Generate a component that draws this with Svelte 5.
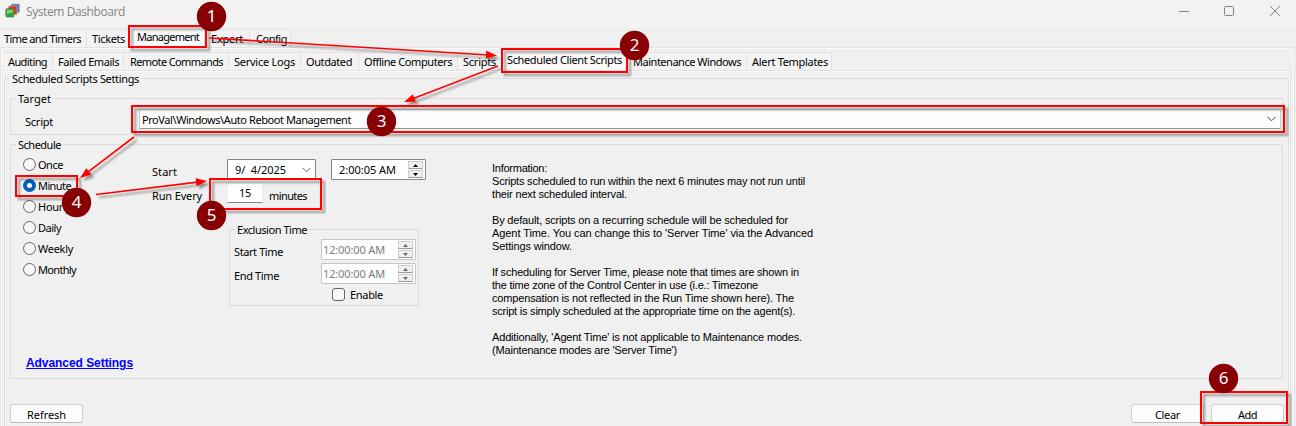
<script>
  const mainTabs = [
    { label: 'Time and Timers', tab: 87, pad: 4, text: 77 },
    { label: 'Tickets', tab: 42, pad: 5, text: 33 },
    { label: 'Management', tab: 76, pad: 8, text: 62, active: true },
    { label: 'Expert', tab: 45, pad: 6, text: 32 },
    { label: 'Config', tab: 41, pad: 6, text: 31 }
  ];
  const subTabs = [
    { label: 'Auditing', tab: 50, pad: 5, text: 39 },
    { label: 'Failed Emails', tab: 71, pad: 5, text: 61 },
    { label: 'Remote Commands', tab: 105, pad: 6, text: 93 },
    { label: 'Service Logs', tab: 72, pad: 5, text: 61 },
    { label: 'Outdated', tab: 58, pad: 5, text: 46 },
    { label: 'Offline Computers', tab: 99, pad: 5, text: 88 },
    { label: 'Scripts', tab: 44, pad: 5, text: 33 },
    { label: 'Scheduled Client Scripts', tab: 125, pad: 5, text: 115, active: true },
    { label: 'Maintenance Windows', tab: 120, pad: 6, text: 108 },
    { label: 'Alert Templates', tab: 85, pad: 5, text: 76 }
  ];
  const modes = [
    ['Once', 25], ['Minute', 33], ['Hourly', 33], ['Daily', 23], ['Weekly', 35], ['Monthly', 38]
  ];
  const info = [
    ['Information:', 55],
    ['Scripts scheduled to run within the next 6 minutes may not run until', 313],
    ['their next scheduled interval.', 135],
    ['', 0],
    ['By default, scripts on a recurring schedule will be scheduled for', 296],
    ["Agent Time. You can change this to 'Server Time' via the Advanced", 321],
    ['Settings window.', 80],
    ['', 0],
    ['If scheduling for Server Time, please note that times are shown in', 307],
    ['the time zone of the Control Center in use (i.e.: Timezone', 266],
    ['compensation is not reflected in the Run Time shown here). The', 302],
    ['script is simply scheduled at the appropriate time on the agent(s).', 303],
    ['', 0],
    ["Additionally, 'Agent Time' is not applicable to Maintenance modes.", 310],
    ["(Maintenance modes are 'Server Time')", 185]
  ];
  const boxes = [
    [129, 26, 77, 21], [502, 49, 125, 23], [132, 106, 1152, 26],
    [16, 176, 61, 20], [210, 179, 111, 30], [1201, 392, 86, 31]
  ];
  const arrows = [
    [209, 38, 497, 55.5], [498, 66, 404, 102], [134, 137, 80, 178], [96, 194.5, 207, 181]
  ];
  const steps = [
    [211.5, 16.5], [634.5, 45.5], [381.5, 121.5], [76.5, 202.5], [211.5, 215.5], [1223.5, 378.5]
  ];

  function head([x1, y1, x2, y2]) {
    const a = Math.atan2(y2 - y1, x2 - x1);
    const bx = x2 - 11 * Math.cos(a), by = y2 - 11 * Math.sin(a);
    const dx = 4 * Math.sin(a), dy = 4 * Math.cos(a);
    return `${x2},${y2} ${bx + dx},${by - dy} ${bx - dx},${by + dy}`;
  }

  // Spreads the letters so that the label takes the given width.
  function fit(node, width) {
    const n = node.textContent.length;
    if (!n || !width) return;
    const spacing = (width - node.getBoundingClientRect().width) / n;
    node.style.letterSpacing = `${spacing}px`;
  }
</script>

{#snippet spinner(value, width, disabled)}
  <div class="field time" class:disabled>
    <span use:fit={width}>{value}</span>
    <div class="spin">
      <i><svg width="5" height="3"><path d="M2.5 0 5 3H0Z" /></svg></i>
      <i><svg width="5" height="3"><path d="M0 0H5L2.5 3Z" /></svg></i>
    </div>
  </div>
{/snippet}

{#snippet tabs(list)}
  {#each list as t}
    <div class="tab" class:active={t.active} style="width:{t.tab}px;padding-left:{t.pad}px">
      <span use:fit={t.text}>{t.label}</span>
    </div>
  {/each}
{/snippet}

<div class="window">
  <header>
    <svg class="logo" width="16" height="16" viewBox="0 0 16 16">
      <rect x="6" y="1" width="8.5" height="8.5" rx="1" fill="#3f7fca" stroke="#8fb3dc" stroke-width=".7" />
      <rect x="3.5" y="3" width="8.5" height="8.5" rx="1" fill="#d83a22" stroke="#ee9a80" stroke-width=".7" />
      <rect x="0.8" y="5.8" width="8.2" height="8.2" rx="1" fill="#38a238" stroke="#4c804c" stroke-width=".7" />
      <path d="M2 7h6v2L2 11Z" fill="#83cf76" />
    </svg>
    <span class="title" use:fit={99}>System Dashboard</span>
    <svg class="controls" width="104" height="12" viewBox="0 0 104 12" fill="none" stroke="#858585">
      <path d="M0 6.5H10" />
      <rect x="45.5" y="1.5" width="9" height="9" rx="1" />
      <path d="M91 1 101 11M101 1 91 11" />
    </svg>
  </header>

  <nav class="main">{@render tabs(mainTabs)}</nav>
  <div class="page outer">
    <nav class="sub">{@render tabs(subTabs)}</nav>
    <div class="page inner">
      <fieldset class="settings">
        <legend><span use:fit={127}>Scheduled Scripts Settings</span></legend>
        <fieldset class="target">
          <legend><span use:fit={33}>Target</span></legend>
          <div class="row">
            <label for="script"><span use:fit={28}>Script</span></label>
            <div class="combo" id="script">
              <span use:fit={209}>ProVal\Windows\Auto Reboot Management</span>
              <svg width="9" height="6" fill="none" stroke="#444"><path d="M.5 .8 4.5 4.8 8.5 .8" /></svg>
            </div>
          </div>
        </fieldset>

        <fieldset class="schedule">
          <legend><span use:fit={43}>Schedule</span></legend>
          <div class="cols">
            <div class="modes">
              {#each modes as [name, w]}
                <div class="radio" class:on={name === 'Minute'}><b></b><span use:fit={w}>{name}</span></div>
              {/each}
              <a class="advanced"><span use:fit={107}>Advanced Settings</span></a>
            </div>
            <div class="timing">
              <div class="line start">
                <div class="name"><span use:fit={25}>Start</span></div>
                <div class="field date">
                  <span class="pre" use:fit={51}>9/  4/2025</span>
                  <svg width="9" height="6" fill="none" stroke="#666"><path d="M.5 .8 4.5 4.8 8.5 .8" /></svg>
                </div>
                {@render spinner('2:00:05 AM', 57, false)}
              </div>
              <div class="line every">
                <div class="name"><span use:fit={50}>Run Every</span></div>
                <div class="count"><span use:fit={12}>15</span></div>
                <span use:fit={38}>minutes</span>
              </div>
              <fieldset class="exclusion">
                <legend><span use:fit={70}>Exclusion Time</span></legend>
                <div class="ex">
                  <span><span use:fit={49}>Start Time</span></span>
                  {@render spinner('12:00:00 AM', 62, true)}
                </div>
                <div class="ex">
                  <span><span use:fit={45}>End Time</span></span>
                  {@render spinner('12:00:00 AM', 62, true)}
                </div>
                <div class="check"><b></b><span use:fit={33}>Enable</span></div>
              </fieldset>
            </div>
            <div class="info">
              {#each info as [line, w]}
                <div><span use:fit={w}>{line}</span></div>
              {/each}
            </div>
          </div>
        </fieldset>

        <footer>
          <button><span use:fit={39}>Refresh</span></button>
          <button class="clear"><span use:fit={25}>Clear</span></button>
          <button><span use:fit={19}>Add</span></button>
        </footer>
      </fieldset>
    </div>
  </div>

  <svg class="notes" width="1296" height="426">
    <g class="marks">
      {#each boxes as [x, y, w, h]}
        <rect {x} {y} width={w} height={h} fill="none" stroke="#f00" stroke-width="2" />
      {/each}
      {#each arrows as a}
        <path d="M{a[0]} {a[1]}L{a[2] + (a[0] - a[2]) * 0.03} {a[3] + (a[1] - a[3]) * 0.03}" stroke="#f00" stroke-width="1.6" />
        <polygon points={head(a)} fill="#f00" />
      {/each}
    </g>
    {#each steps as [x, y], i}
      <circle cx={x} cy={y} r="14.7" fill="#880003" />
      <text {x} y={y + 5.5} text-anchor="middle">{i + 1}</text>
    {/each}
  </svg>
</div>

<style>
  :global(body) { margin: 0; overflow: hidden; }
  * { box-sizing: border-box; }
  .window {
    position: relative; width: 1296px; height: 426px; overflow: hidden;
    background: #f0f0f0; color: #000;
    font: 11px/13px "Noto Sans", sans-serif;
    white-space: nowrap;
  }
  span { white-space: pre; }
  header { display: flex; align-items: center; height: 27px; padding: 0 15px 4px 5px; background: #f3f3f3; }
  .logo { margin-top: -1px; }
  .title { margin-left: 5px; color: #858585; font: 12px/16px "Open Sans", sans-serif; }
  .controls { margin: -1px -2px 0 auto; }
  nav { display: flex; align-items: flex-end; }
  .main { height: 20px; }
  .sub { height: 22px; padding-left: 2px; }
  .tab { height: 18px; padding-top: 2px; background: #f3f3f3; border: solid #e2e2e2; border-width: 1px 1px 0 0; flex: none; }
  .tab.active { height: 20px; padding-top: 2px; background: #f9f9f9; }
  .page { border: 1px solid #e3e3e3; box-shadow: inset 0 0 0 1px #fafafa; }
  .outer { height: 384px; margin-right: 1px; padding-left: 0; }
  .inner { height: 370px; margin: 0 3px 0 1px; padding: 1px 1px 0 1px; }
  fieldset { margin: 0; padding: 0; border: 1px solid #dcdcdc; min-width: 0; }
  legend { height: 13px; margin-left: 5px; padding: 0 2px; }
  .settings { height: 380px; padding: 0 5px; }
  .settings > legend { margin-left: 0; }
  .target { margin-top: 7px; height: 43px; }
  .row { display: flex; align-items: center; height: 20px; margin-top: 4px; }
  .row label { width: 128px; padding: 4px 0 0 14px; }
  .combo {
    flex: 1; display: flex; align-items: center; justify-content: space-between; height: 20px;
    margin-right: 1px; padding: 0 4px 0 2px; background: #fdfdfd; border: 1px solid #ccc; border-bottom-color: #999;
  }
  .schedule { height: 241px; margin-top: 3px; }
  .cols { display: flex; height: 226px; }
  .modes { display: flex; flex-direction: column; width: 141px; padding: 3px 0 0 12px; }
  .radio { display: flex; align-items: center; gap: 2px; height: 21px; }
  .radio b { width: 13px; height: 13px; border: 1px solid #666; border-radius: 50%; background: #f7f7f7; }
  .radio.on b { border: 4px solid #005fb8; background: #fff; }
  .advanced { margin: 76px 0 0 3px; color: #00f; font: bold 12px/14px "Liberation Sans", sans-serif; text-decoration: underline; }
  .timing { width: 340px; }
  .line { display: flex; }
  .start { padding-top: 8px; }
  .name { width: 75px; padding-top: 6px; }
  .field { display: flex; align-items: center; height: 21px; background: #fff; border: 1px solid #868686; border-radius: 1px; }
  .date { width: 89px; margin-right: 15px; padding: 0 4px 0 7px; justify-content: space-between; }
  .time { width: 95px; padding: 0 2px 0 7px; justify-content: space-between; }
  .spin { display: flex; flex-direction: column; gap: 1px; }
  .spin i { display: flex; align-items: center; justify-content: center; width: 15px; height: 8px; background: #f0f0f0; border: 1px solid #ccc; border-bottom-color: #999; }
  .disabled { color: #7b7b7b; border-color: #c4c4c4; padding-left: 1px; }
  .disabled svg { fill: #666; }
  .every { padding-top: 3px; }
  .every .name { padding-top: 6px; }
  .count { width: 36px; height: 20px; margin-right: 6px; padding: 2px 0 0 11px; background: #fff; border: 1px solid #eee; border-bottom-color: #888; }
  .every > span { padding-top: 6px; }
  .exclusion { width: 190px; height: 83px; margin: 20px 0 0 77px; }
  .exclusion legend { margin-left: 5px; }
  .ex { display: flex; justify-content: space-between; height: 24px; padding: 0 2px 0 4px; }
  .ex:nth-of-type(1) { margin-top: 3px; }
  .ex > span { padding-top: 6px; }
  .check { display: flex; align-items: center; gap: 5px; margin: 1px 0 0 102px; }
  .check b { width: 13px; height: 13px; border: 1px solid #666; border-radius: 3px; background: #f7f7f7; }
  .info { padding-top: 11px; font-family: "Liberation Sans", Arial, sans-serif; font-size: 11px; }
  .info div { height: 13px; }
  footer { display: flex; gap: 7px; margin: 25px -1px 0 0; }
  button { width: 73px; height: 19px; padding: 1px 0 0; border: 1px solid #d0d0d0; border-bottom-color: #bbb; border-radius: 3px; background: #fdfdfd; color: #000; font: inherit; line-height: 15px; }
  .clear { margin-left: auto; }
  .notes { position: absolute; left: 0; top: 0; }
  .marks { filter: drop-shadow(3px 3px 1px rgba(0, 0, 0, .38)); }
  .notes text { fill: #fff; font: 17px "Noto Sans", sans-serif; }
</style>
